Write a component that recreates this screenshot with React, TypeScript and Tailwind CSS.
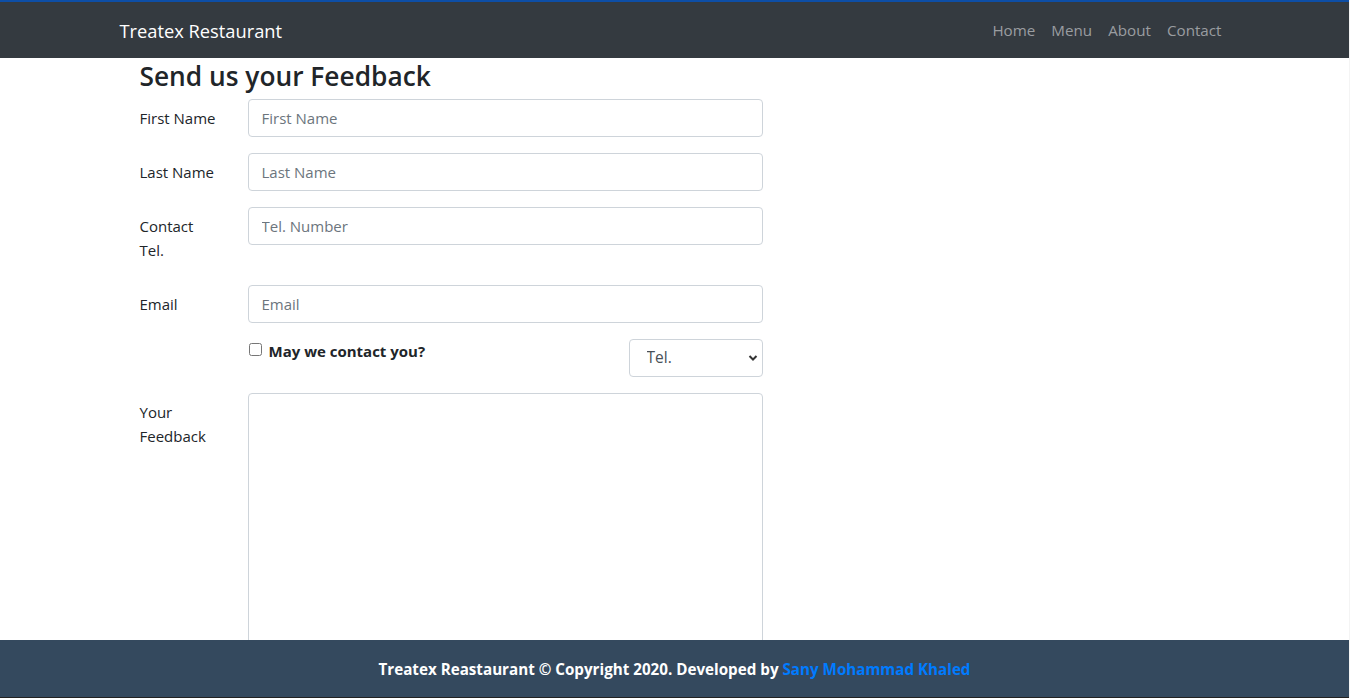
import React from "react";

const font = { fontFamily: '"Open Sans", "Noto Sans", Arial, sans-serif' };

const navLinks = ["Home", "Menu", "About", "Contact"];

const inputCls =
  "h-[38px] w-full rounded-[4px] border border-[#ced4da] bg-white px-[13px] text-[15px] text-[#495057] placeholder:text-[#6c757d] outline-none";

function Row({ label, children }: { label: React.ReactNode; children: React.ReactNode }) {
  return (
    <div className="mb-4 flex">
      <label className="w-[108px] shrink-0 pr-[22px] pt-[7px] pb-[7px] text-[15px] leading-6 text-[#212529]">
        {label}
      </label>
      <div className="w-[515px]">{children}</div>
    </div>
  );
}

export default function App() {
  return (
    <div className="relative h-[698px] w-[1350px] overflow-hidden bg-white" style={font}>
      <div className="flex h-full">
        <div className="flex w-[1349px] flex-col">
          {/* Navbar */}
          <nav className="h-[58px] shrink-0 border-t-2 border-[#0d4ea6] bg-[#343a40]">
            <div className="mx-auto flex h-full w-[1110px] items-center justify-between">
              <span className="pt-[2px] text-[18.3px] leading-none text-white">Treatex Restaurant</span>
              <ul className="flex">
                {navLinks.map((l) => (
                  <li key={l} className="px-2 text-[15.2px] text-[#9a9da0]">
                    {l}
                  </li>
                ))}
              </ul>
            </div>
          </nav>

          {/* Form */}
          <div className="mx-auto w-[1110px] pl-5">
            <h2 className="mb-[5px] text-[26.3px] font-semibold leading-[36px] text-[#212529]">
              Send us your Feedback
            </h2>
            <form>
              <Row label="First Name">
                <input className={inputCls} placeholder="First Name" />
              </Row>
              <Row label="Last Name">
                <input className={inputCls} placeholder="Last Name" />
              </Row>
              <Row label={<>Contact<br />Tel.</>}>
                <input className={inputCls} placeholder="Tel. Number" />
              </Row>
              <Row label="Email">
                <input className={inputCls} placeholder="Email" />
              </Row>
              <div className="mb-4 flex">
                <div className="w-[108px] shrink-0" />
                <div className="flex w-[515px] items-start justify-between">
                  <label className="flex items-start text-[15px] font-bold leading-6 text-[#212529]">
                    <input type="checkbox" className="ml-[1px] mr-[7px] mt-[4px] h-[13px] w-[13px]" />
                    May we contact you?
                  </label>
                  <div className="relative w-[134px]">
                    <select className="h-[38px] w-full appearance-none rounded-[4px] border border-[#ced4da] bg-white pl-[17px] text-[15.5px] text-[#495057] outline-none">
                      <option>Tel.</option>
                      <option>Email</option>
                    </select>
                    <svg
                      className="pointer-events-none absolute right-[5px] top-[15px]"
                      width="10"
                      height="8"
                      viewBox="0 0 10 8"
                    >
                      <path d="M1.5 2l3.5 3.5L8.5 2" fill="none" stroke="#333" strokeWidth="2" />
                    </svg>
                  </div>
                </div>
              </div>
              <Row label={<>Your<br />Feedback</>}>
                <textarea className="h-[300px] w-full resize-none rounded-[4px] border border-[#ced4da] outline-none" />
              </Row>
            </form>
          </div>
        </div>
        <div className="w-px bg-[#f4f4f4]" />
      </div>

      {/* Fixed footer */}
      <footer className="absolute bottom-0 left-0 flex h-[58px] w-[1349px] items-center justify-center border-b border-[#222] bg-[#34495e]">
        <p className="pt-[2px] text-[15.2px] font-bold text-white">
          Treatex Reastaurant © Copyright 2020. Developed by{" "}
          <a className="text-[#007bff]">Sany Mohammad Khaled</a>
        </p>
      </footer>
    </div>
  );
}
